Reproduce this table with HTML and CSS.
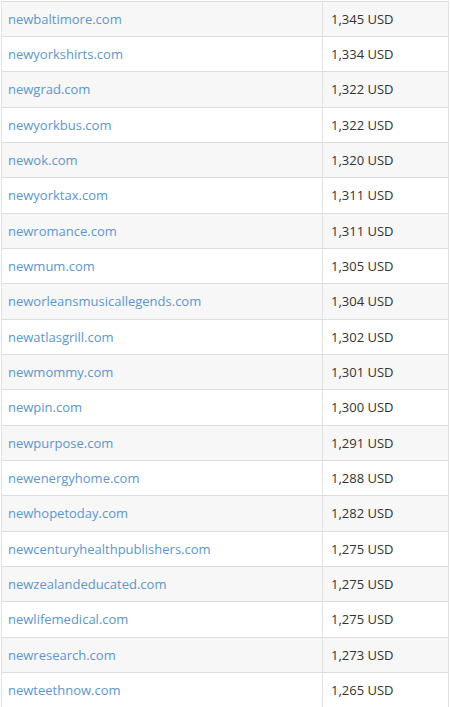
FILE: index.html
```html
<!DOCTYPE html>
<html>
<head>
<meta charset="utf-8">
<link rel="stylesheet" href="styles.css">
</head>
<body>
<div class="table">
  <div class="row"><div class="name"><a href="#">newbaltimore.com</a></div><div class="price">1,345 USD</div></div>
  <div class="row"><div class="name"><a href="#">newyorkshirts.com</a></div><div class="price">1,334 USD</div></div>
  <div class="row"><div class="name"><a href="#">newgrad.com</a></div><div class="price">1,322 USD</div></div>
  <div class="row"><div class="name"><a href="#">newyorkbus.com</a></div><div class="price">1,322 USD</div></div>
  <div class="row"><div class="name"><a href="#">newok.com</a></div><div class="price">1,320 USD</div></div>
  <div class="row"><div class="name"><a href="#">newyorktax.com</a></div><div class="price">1,311 USD</div></div>
  <div class="row"><div class="name"><a href="#">newromance.com</a></div><div class="price">1,311 USD</div></div>
  <div class="row"><div class="name"><a href="#">newmum.com</a></div><div class="price">1,305 USD</div></div>
  <div class="row"><div class="name"><a href="#">neworleansmusicallegends.com</a></div><div class="price">1,304 USD</div></div>
  <div class="row"><div class="name"><a href="#">newatlasgrill.com</a></div><div class="price">1,302 USD</div></div>
  <div class="row"><div class="name"><a href="#">newmommy.com</a></div><div class="price">1,301 USD</div></div>
  <div class="row"><div class="name"><a href="#">newpin.com</a></div><div class="price">1,300 USD</div></div>
  <div class="row"><div class="name"><a href="#">newpurpose.com</a></div><div class="price">1,291 USD</div></div>
  <div class="row"><div class="name"><a href="#">newenergyhome.com</a></div><div class="price">1,288 USD</div></div>
  <div class="row"><div class="name"><a href="#">newhopetoday.com</a></div><div class="price">1,282 USD</div></div>
  <div class="row"><div class="name"><a href="#">newcenturyhealthpublishers.com</a></div><div class="price">1,275 USD</div></div>
  <div class="row"><div class="name"><a href="#">newzealandeducated.com</a></div><div class="price">1,275 USD</div></div>
  <div class="row"><div class="name"><a href="#">newlifemedical.com</a></div><div class="price">1,275 USD</div></div>
  <div class="row"><div class="name"><a href="#">newresearch.com</a></div><div class="price">1,273 USD</div></div>
  <div class="row"><div class="name"><a href="#">newteethnow.com</a></div><div class="price">1,265 USD</div></div>
</div>
</body>
</html>
```
FILE: styles.css
```css
html, body {
  margin: 0;
  padding: 0;
  background: #ffffff;
}
body {
  font-family: "Open Sans", "Liberation Sans", sans-serif;
  font-size: 13px;
  color: #333333;
}
.table {
  margin: 0.67px 0 0 1px;
  width: 448px;
  box-sizing: border-box;
  border-left: 1px solid #e3e3e3;
  border-right: 1px solid #e3e3e3;
}
.row {
  display: flex;
  height: 35.333px;
  box-sizing: border-box;
  border-top: 1px solid #dddddd;
}
.row:nth-child(odd) {
  background: #f7f7f7;
}
.name {
  width: 321px;
  box-sizing: border-box;
  border-right: 1px solid #e3e3e3;
  padding-left: 6px;
  display: flex;
  align-items: center;
}
.name a {
  color: #5b96cf;
  text-decoration: none;
}
.price {
  flex: 1;
  padding-left: 8px;
  display: flex;
  align-items: center;
  color: #333333;
}
```
